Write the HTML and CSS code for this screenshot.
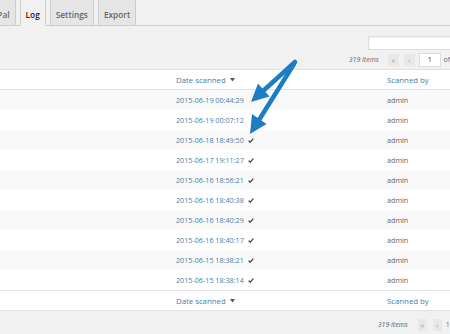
FILE: index.html
```html
<!DOCTYPE html>
<html>
<head>
<meta charset="utf-8">
<link rel="stylesheet" href="styles.css">
</head>
<body>
<div class="page">
  <nav class="tabs">
    <a class="tab first">PayPal</a>
    <a class="tab active">Log</a>
    <a class="tab">Settings</a>
    <a class="tab">Export</a>
  </nav>
  <div class="search">
    <input class="search-input" type="search">
  </div>
  <div class="tablenav tablenav-top">
    <span class="num">319 items</span>
    <span class="pg-btn">«</span>
    <span class="pg-btn">‹</span>
    <span class="paging"><input class="cur" value="1"> of <span>32</span></span>
    <span class="pg-btn on">›</span>
    <span class="pg-btn on">»</span>
  </div>
  <div class="table">
    <div class="row head">
      <span></span>
      <span class="th">Date scanned <svg class="sort" width="5" height="4" viewBox="0 0 5 4"><path d="M0 0H5L2.5 3.5Z" fill="#555"/></svg></span>
      <span class="th">Scanned by</span>
    </div>
    <div class="row alt"><span></span><span class="date">2015-06-19 00:44:29</span><span class="user">admin</span></div>
    <div class="row"><span></span><span class="date">2015-06-19 00:07:12</span><span class="user">admin</span></div>
    <div class="row alt"><span></span><span class="date">2015-06-18 18:49:50<svg class="chk" width="6" height="5" viewBox="0 0 6 5"><path d="M0.6 2.6L2.2 4.2L5.4 0.6" fill="none" stroke="#3a3a3a" stroke-width="1.2"/></svg></span><span class="user">admin</span></div>
    <div class="row"><span></span><span class="date">2015-06-17 19:11:27<svg class="chk" width="6" height="5" viewBox="0 0 6 5"><path d="M0.6 2.6L2.2 4.2L5.4 0.6" fill="none" stroke="#3a3a3a" stroke-width="1.2"/></svg></span><span class="user">admin</span></div>
    <div class="row alt"><span></span><span class="date">2015-06-16 18:56:21<svg class="chk" width="6" height="5" viewBox="0 0 6 5"><path d="M0.6 2.6L2.2 4.2L5.4 0.6" fill="none" stroke="#3a3a3a" stroke-width="1.2"/></svg></span><span class="user">admin</span></div>
    <div class="row"><span></span><span class="date">2015-06-16 18:40:38<svg class="chk" width="6" height="5" viewBox="0 0 6 5"><path d="M0.6 2.6L2.2 4.2L5.4 0.6" fill="none" stroke="#3a3a3a" stroke-width="1.2"/></svg></span><span class="user">admin</span></div>
    <div class="row alt"><span></span><span class="date">2015-06-16 18:40:29<svg class="chk" width="6" height="5" viewBox="0 0 6 5"><path d="M0.6 2.6L2.2 4.2L5.4 0.6" fill="none" stroke="#3a3a3a" stroke-width="1.2"/></svg></span><span class="user">admin</span></div>
    <div class="row"><span></span><span class="date">2015-06-16 18:40:17<svg class="chk" width="6" height="5" viewBox="0 0 6 5"><path d="M0.6 2.6L2.2 4.2L5.4 0.6" fill="none" stroke="#3a3a3a" stroke-width="1.2"/></svg></span><span class="user">admin</span></div>
    <div class="row alt"><span></span><span class="date">2015-06-15 18:38:21<svg class="chk" width="6" height="5" viewBox="0 0 6 5"><path d="M0.6 2.6L2.2 4.2L5.4 0.6" fill="none" stroke="#3a3a3a" stroke-width="1.2"/></svg></span><span class="user">admin</span></div>
    <div class="row"><span></span><span class="date">2015-06-15 18:38:14<svg class="chk" width="6" height="5" viewBox="0 0 6 5"><path d="M0.6 2.6L2.2 4.2L5.4 0.6" fill="none" stroke="#3a3a3a" stroke-width="1.2"/></svg></span><span class="user">admin</span></div>
    <div class="row foot">
      <span></span>
      <span class="th">Date scanned <svg class="sort" width="5" height="4" viewBox="0 0 5 4"><path d="M0 0H5L2.5 3.5Z" fill="#555"/></svg></span>
      <span class="th">Scanned by</span>
    </div>
  </div>
  <div class="tablenav tablenav-bottom">
    <span class="num">319 items</span>
    <span class="pg-btn">«</span>
    <span class="pg-btn">‹</span>
    <span class="paging">1 of <span>32</span></span>
    <span class="pg-btn on">›</span>
    <span class="pg-btn on">»</span>
  </div>
</div>
<svg class="annot" width="450" height="334" viewBox="0 0 450 334">
  <g stroke="#1c7dc3" stroke-width="4.5" stroke-linecap="round" fill="none">
    <path d="M295 62 L263 91"/>
    <path d="M294 64 L259 120"/>
  </g>
  <g fill="#1c7dc3">
    <path d="M251 102 L269.5 96.5 L258 83.5 Z"/>
    <path d="M250 134 L266.5 124 L252 114 Z"/>
  </g>
</svg>
</body>
</html>
```
FILE: styles.css
```css
html, body {
  margin: 0;
  padding: 0;
}
body {
  background: #f1f1f1;
  font-family: "Open Sans", sans-serif;
  width: 450px;
  height: 334px;
  overflow: hidden;
  position: relative;
  color: #555;
}
.page {
  width: 510px;
  margin-left: -20px;
}
.tabs {
  display: flex;
  align-items: flex-end;
  height: 31px;
  margin-top: -6px;
  margin-left: -3px;
  border-bottom: 1px solid #ccc;
}
.tab {
  display: block;
  margin-left: 4px;
  padding: 13px 5px 3px;
  line-height: 14px;
  font-size: 8.3px;
  font-weight: 600;
  color: #666;
  background: #e5e5e5;
  border: 1px solid #ccc;
  border-bottom: 0;
  text-decoration: none;
}
.tab.first {
  margin-left: 0;
}
.tab.active {
  background: #f1f1f1;
  color: #222;
  border-bottom: 1px solid #f1f1f1;
  margin-bottom: -1px;
}
.search {
  display: flex;
  justify-content: flex-end;
  margin-top: 10px;
  height: 14px;
}
.search-input {
  width: 122px;
  height: 14px;
  box-sizing: border-box;
  margin: 0;
  padding: 0;
  border: 1px solid #ddd;
  background: #fff;
  box-shadow: inset 0 1px 2px rgba(0,0,0,.07);
}
.tablenav {
  display: flex;
  justify-content: flex-end;
  align-items: center;
  height: 15px;
  margin-top: 2px;
  font-size: 7px;
  color: #666;
}
.tablenav-top {
  margin-right: -2px;
}
.num {
  font-style: italic;
  margin-right: 4px;
}
.pg-btn {
  display: flex;
  align-items: center;
  justify-content: center;
  width: 11px;
  height: 12px;
  margin-left: 5px;
  background: #e8e8e8;
  color: #a0a5aa;
  font-size: 8px;
}
.pg-btn.on {
  background: #e0e0e0;
  color: #555;
}
.paging {
  margin-left: 4px;
  display: flex;
  align-items: center;
  white-space: pre;
}
.cur {
  width: 22px;
  height: 14px;
  box-sizing: border-box;
  margin: 0 1px 0 0;
  padding: 0;
  border: 1px solid #ddd;
  background: #fff;
  font-family: "Open Sans", sans-serif;
  font-size: 7px;
  text-align: center;
  color: #333;
}
.table {
  margin-top: 2px;
  background: #fff;
  border: 1px solid #e1e1e1;
}
.row {
  display: grid;
  grid-template-columns: 190px 211px 1fr;
  align-items: center;
  height: 20px;
  font-size: 7.2px;
}
.row > span {
  padding-left: 5px;
  white-space: nowrap;
}
.row.alt {
  background: #f9f9f9;
}
.row.head {
  height: 19px;
  border-bottom: 1px solid #e1e1e1;
}
.row.foot {
  height: 19px;
  border-top: 1px solid #e1e1e1;
}
.th {
  font-size: 7.8px;
  color: #3d80ad;
}
.sort {
  margin-left: 2px;
  vertical-align: 1px;
}
.date {
  color: #4880a8;
}
.chk {
  margin-left: 4px;
}
.user {
  color: #666;
}
.tablenav-bottom {
  margin-top: 7px;
  margin-right: -8px;
  height: 13px;
}
.tablenav-bottom .pg-btn {
  width: 9px;
  margin-left: 6px;
}
.annot {
  position: absolute;
  left: 0;
  top: 0;
  pointer-events: none;
}
```
